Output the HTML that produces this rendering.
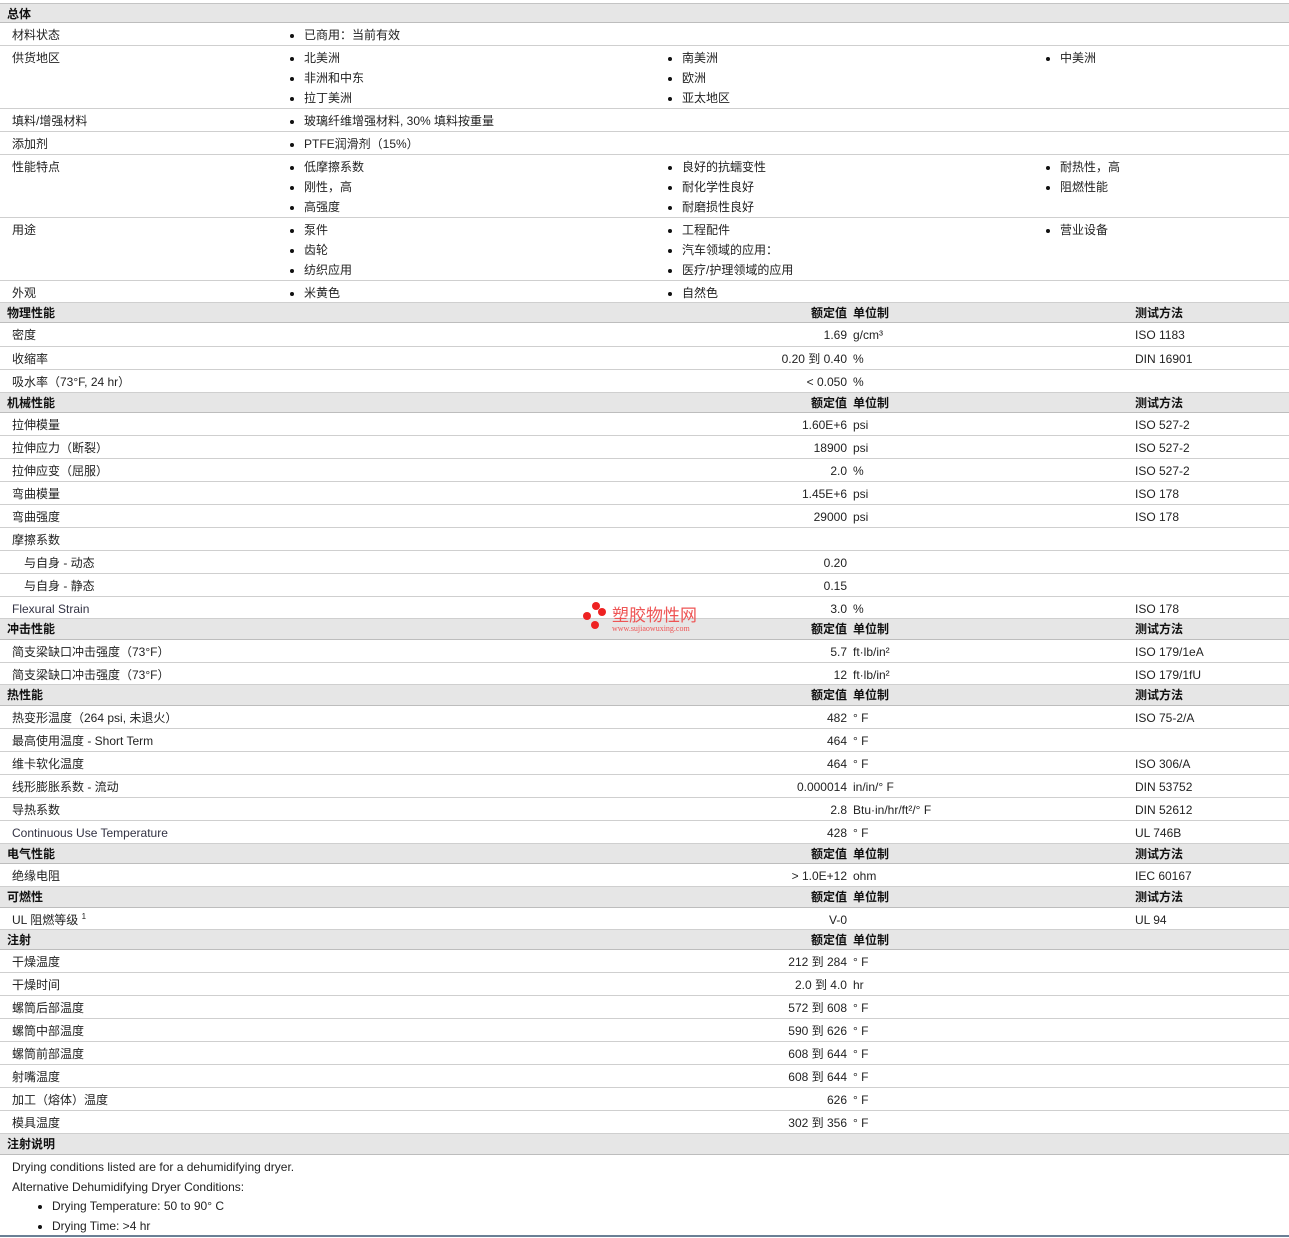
<!DOCTYPE html>
<html><head><meta charset="utf-8">
<style>
body{margin:0;background:#fff;font-family:"Liberation Sans","Noto Sans CJK SC",sans-serif;font-size:12px;color:#222;width:1289px;height:1238px;overflow:hidden;position:relative}
.w{position:absolute;top:3px;left:0;width:1289px;border-top:1px solid #c4c4c4}
.r,.h{position:relative;box-sizing:border-box;border-bottom:1px solid #cfcfcf;height:23px}
.h{background:#e6e6e6;font-weight:bold;height:20px;border-bottom:1px solid #bdbdbd;color:#111}
.h span{position:absolute;top:3px;line-height:15px}
.r span{position:absolute;top:5px;line-height:15px;white-space:nowrap}
.l{left:12px}.hl{left:7px}
.v{right:442px;text-align:right}
.u{left:853px}.t{left:1135px}
.c{position:absolute;top:0}
.c div{position:relative;height:20px;line-height:20px;padding-left:14px;white-space:nowrap}
.c div:before{content:"";position:absolute;left:0;top:9px;width:4px;height:4px;border-radius:50%;background:#111}
.c1{left:290px}.c2{left:668px}.c3{left:1046px}
.r .c{top:2px}
</style></head><body>
<div class="w">
<div class="h" style="height:19px"><span class="hl">总体</span></div>
<div class="r"><span class="l">材料状态</span><div class="c c1"><div>已商用：当前有效</div></div></div>
<div class="r" style="height:63px"><span class="l">供货地区</span><div class="c c1"><div>北美洲</div><div>非洲和中东</div><div>拉丁美洲</div></div><div class="c c2"><div>南美洲</div><div>欧洲</div><div>亚太地区</div></div><div class="c c3"><div>中美洲</div></div></div>
<div class="r"><span class="l">填料/增强材料</span><div class="c c1"><div>玻璃纤维增强材料, 30% 填料按重量</div></div></div>
<div class="r"><span class="l">添加剂</span><div class="c c1"><div>PTFE润滑剂（15%）</div></div></div>
<div class="r" style="height:63px"><span class="l">性能特点</span><div class="c c1"><div>低摩擦系数</div><div>刚性，高</div><div>高强度</div></div><div class="c c2"><div>良好的抗蠕变性</div><div>耐化学性良好</div><div>耐磨损性良好</div></div><div class="c c3"><div>耐热性，高</div><div>阻燃性能</div></div></div>
<div class="r" style="height:63px"><span class="l">用途</span><div class="c c1"><div>泵件</div><div>齿轮</div><div>纺织应用</div></div><div class="c c2"><div>工程配件</div><div>汽车领域的应用：</div><div>医疗/护理领域的应用</div></div><div class="c c3"><div>营业设备</div></div></div>
<div class="r" style="height:22px"><span class="l">外观</span><div class="c c1"><div>米黄色</div></div><div class="c c2"><div>自然色</div></div></div>

<div class="h"><span class="hl">物理性能</span><span class="v">额定值</span><span class="u">单位制</span><span class="t">测试方法</span></div>
<div class="r" style="height:24px"><span class="l">密度</span><span class="v">1.69</span><span class="u">g/cm³</span><span class="t">ISO 1183</span></div>
<div class="r"><span class="l">收缩率</span><span class="v">0.20 到 0.40</span><span class="u">%</span><span class="t">DIN 16901</span></div>
<div class="r"><span class="l">吸水率（73°F, 24 hr）</span><span class="v">&lt; 0.050</span><span class="u">%</span></div>

<div class="h"><span class="hl">机械性能</span><span class="v">额定值</span><span class="u">单位制</span><span class="t">测试方法</span></div>
<div class="r"><span class="l">拉伸模量</span><span class="v">1.60E+6</span><span class="u">psi</span><span class="t">ISO 527-2</span></div>
<div class="r"><span class="l">拉伸应力（断裂）</span><span class="v">18900</span><span class="u">psi</span><span class="t">ISO 527-2</span></div>
<div class="r"><span class="l">拉伸应变（屈服）</span><span class="v">2.0</span><span class="u">%</span><span class="t">ISO 527-2</span></div>
<div class="r"><span class="l">弯曲模量</span><span class="v">1.45E+6</span><span class="u">psi</span><span class="t">ISO 178</span></div>
<div class="r"><span class="l">弯曲强度</span><span class="v">29000</span><span class="u">psi</span><span class="t">ISO 178</span></div>
<div class="r"><span class="l">摩擦系数</span></div>
<div class="r"><span class="l" style="left:24px">与自身 - 动态</span><span class="v">0.20</span></div>
<div class="r"><span class="l" style="left:24px">与自身 - 静态</span><span class="v">0.15</span></div>
<div class="r" style="height:22px"><span class="l" style="color:#334">Flexural Strain</span><span class="v">3.0</span><span class="u">%</span><span class="t">ISO 178</span></div>

<div class="h" style="height:21px"><span class="hl">冲击性能</span><span class="v">额定值</span><span class="u">单位制</span><span class="t">测试方法</span></div>
<div class="r"><span class="l">简支梁缺口冲击强度（73°F）</span><span class="v">5.7</span><span class="u">ft·lb/in²</span><span class="t">ISO 179/1eA</span></div>
<div class="r" style="height:22px"><span class="l">简支梁缺口冲击强度（73°F）</span><span class="v">12</span><span class="u">ft·lb/in²</span><span class="t">ISO 179/1fU</span></div>

<div class="h" style="height:21px"><span class="hl">热性能</span><span class="v">额定值</span><span class="u">单位制</span><span class="t">测试方法</span></div>
<div class="r"><span class="l">热变形温度（264 psi, 未退火）</span><span class="v">482</span><span class="u">° F</span><span class="t">ISO 75-2/A</span></div>
<div class="r"><span class="l">最高使用温度 - Short Term</span><span class="v">464</span><span class="u">° F</span></div>
<div class="r"><span class="l">维卡软化温度</span><span class="v">464</span><span class="u">° F</span><span class="t">ISO 306/A</span></div>
<div class="r"><span class="l">线形膨胀系数 - 流动</span><span class="v">0.000014</span><span class="u">in/in/° F</span><span class="t">DIN 53752</span></div>
<div class="r"><span class="l">导热系数</span><span class="v">2.8</span><span class="u">Btu·in/hr/ft²/° F</span><span class="t">DIN 52612</span></div>
<div class="r"><span class="l" style="color:#334">Continuous Use Temperature</span><span class="v">428</span><span class="u">° F</span><span class="t">UL 746B</span></div>

<div class="h"><span class="hl">电气性能</span><span class="v">额定值</span><span class="u">单位制</span><span class="t">测试方法</span></div>
<div class="r"><span class="l">绝缘电阻</span><span class="v">&gt; 1.0E+12</span><span class="u">ohm</span><span class="t">IEC 60167</span></div>
<div class="h" style="height:21px"><span class="hl">可燃性</span><span class="v">额定值</span><span class="u">单位制</span><span class="t">测试方法</span></div>
<div class="r" style="height:22px"><span class="l">UL 阻燃等级 <sup style="font-size:8px;line-height:0">1</sup></span><span class="v">V-0</span><span class="t">UL 94</span></div>

<div class="h"><span class="hl">注射</span><span class="v">额定值</span><span class="u">单位制</span></div>
<div class="r"><span class="l">干燥温度</span><span class="v">212 到 284</span><span class="u">° F</span></div>
<div class="r"><span class="l">干燥时间</span><span class="v">2.0 到 4.0</span><span class="u">hr</span></div>
<div class="r"><span class="l">螺筒后部温度</span><span class="v">572 到 608</span><span class="u">° F</span></div>
<div class="r"><span class="l">螺筒中部温度</span><span class="v">590 到 626</span><span class="u">° F</span></div>
<div class="r"><span class="l">螺筒前部温度</span><span class="v">608 到 644</span><span class="u">° F</span></div>
<div class="r"><span class="l">射嘴温度</span><span class="v">608 到 644</span><span class="u">° F</span></div>
<div class="r"><span class="l">加工（熔体）温度</span><span class="v">626</span><span class="u">° F</span></div>
<div class="r"><span class="l">模具温度</span><span class="v">302 到 356</span><span class="u">° F</span></div>
<div class="h" style="height:21px"><span class="hl">注射说明</span></div>
<div style="position:relative;height:82px;border-bottom:2px solid #6a7f95;box-sizing:border-box">
<div style="position:absolute;left:12px;top:5px;line-height:15px">Drying conditions listed are for a dehumidifying dryer.</div>
<div style="position:absolute;left:12px;top:25px;line-height:15px">Alternative Dehumidifying Dryer Conditions:</div>
<div class="c" style="left:38px;top:41px"><div>Drying Temperature: 50 to 90° C</div><div>Drying Time: &gt;4 hr</div></div>
</div>
</div>
<div style="position:absolute;left:582px;top:601px;width:130px;height:36px">
<div style="position:absolute;left:10px;top:1px;width:8px;height:8px;border-radius:50%;background:#e22"></div>
<div style="position:absolute;left:16px;top:7px;width:8px;height:8px;border-radius:50%;background:#e22"></div>
<div style="position:absolute;left:1px;top:11px;width:8px;height:8px;border-radius:50%;background:#e22"></div>
<div style="position:absolute;left:9px;top:20px;width:8px;height:8px;border-radius:50%;background:#e22"></div>
<div style="position:absolute;left:30px;top:3px;color:#e55;font-size:17px;font-family:'Noto Sans CJK SC',sans-serif;line-height:20px">塑胶物性网</div>
<div style="position:absolute;left:30px;top:23px;color:#e55;font-size:8px;font-family:'Liberation Serif',serif">www.sujiaowuxing.com</div>
</div>
</body></html>
